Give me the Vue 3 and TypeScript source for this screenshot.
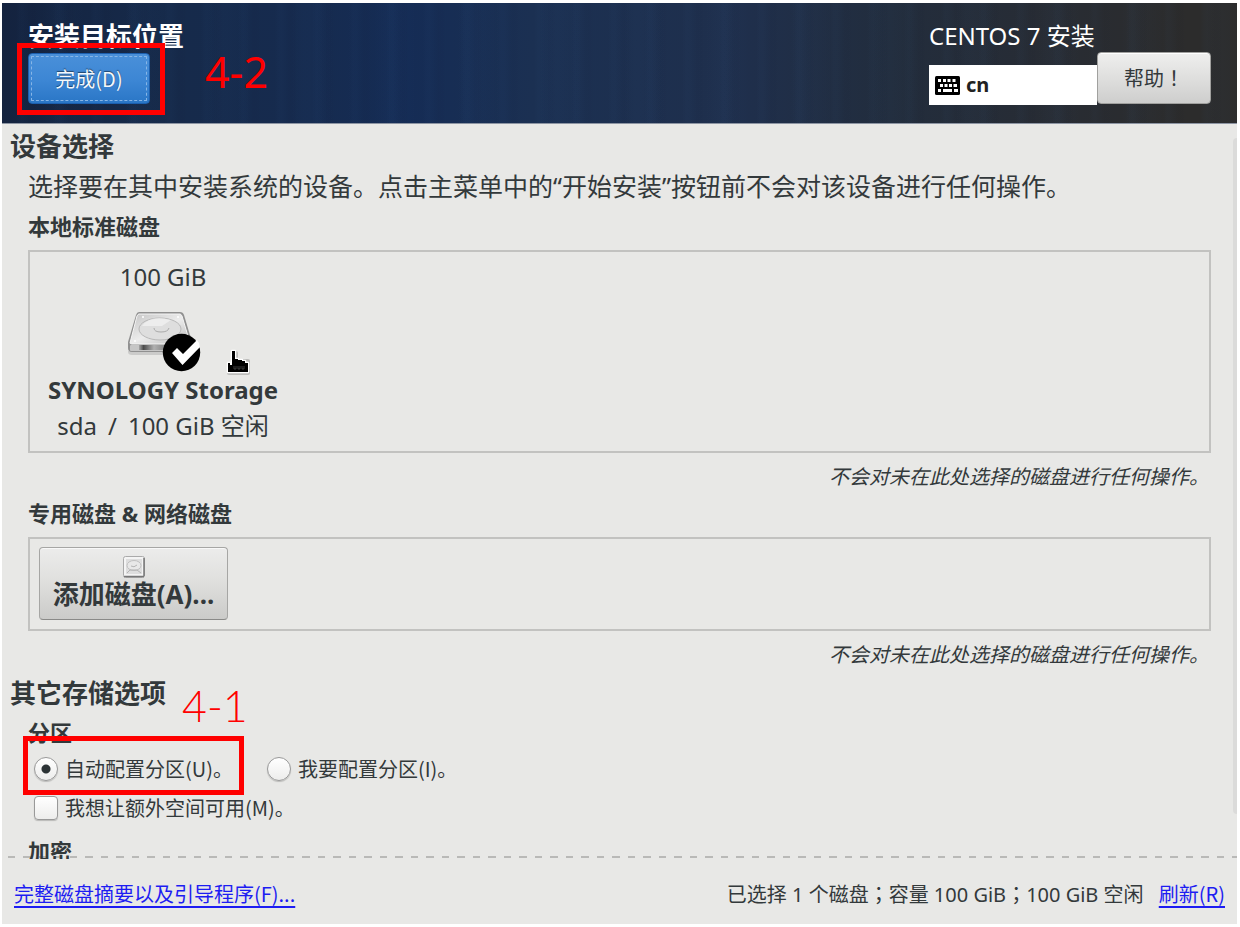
<script setup lang="ts">
import { ref } from 'vue'

const partitioning = ref<'auto' | 'manual'>('auto')
const extraSpace = ref(false)
const untouchedNote = '不会对未在此处选择的磁盘进行任何操作。'
</script>

<template>
  <div class="window">
    <header class="banner">
      <div class="spoke">
        <h1 class="spoke-title">安装目标位置</h1>
        <div class="marked">
          <button type="button" class="done">完成(D)</button>
          <span class="frame frame-done"></span>
          <span class="step step-done">4-2</span>
        </div>
      </div>
      <div class="product">
        <p class="distro">CENTOS 7 安装</p>
        <button type="button" class="layout" aria-label="键盘布局 cn">
          <svg class="keyboard" viewBox="0 0 25 19" width="25" height="19" aria-hidden="true">
            <rect width="25" height="19" rx="1.5" fill="#000" />
            <g fill="#fff">
              <rect x="3" y="3" width="3" height="3" />
              <rect x="8" y="3" width="3" height="3" />
              <rect x="12.500" y="3" width="3" height="3" />
              <rect x="17.500" y="3" width="3" height="3" />
              <rect x="5" y="8" width="3" height="3" />
              <rect x="9.500" y="8" width="3" height="3" />
              <rect x="14" y="8" width="3" height="3" />
              <rect x="18.500" y="8" width="3.500" height="3" />
              <rect x="3" y="13" width="3" height="3" />
              <rect x="8" y="13" width="9" height="3" />
              <rect x="19" y="13" width="4" height="3" />
            </g>
          </svg>
          <span>cn</span>
        </button>
        <button type="button" class="help">帮助<span class="centred">！</span></button>
      </div>
    </header>

    <main class="content">
      <h2>设备选择</h2>
      <p class="intro">选择要在其中安装系统的设备。点击主菜单中的“开始安装”按钮前不会对该设备进行任何操作。</p>

      <h3>本地标准磁盘</h3>
      <section class="disks local">
        <div class="disk">
          <p class="size">100 GiB</p>
          <div class="picture">
            <svg viewBox="-1 0 80 68" width="80" height="68" aria-hidden="true">
              <defs>
                <linearGradient id="lid" x1="0" y1="0" x2="1" y2="1">
                  <stop offset="0" stop-color="#c4c4c4" />
                  <stop offset="0.5" stop-color="#ececec" />
                  <stop offset="1" stop-color="#b8b8b8" />
                </linearGradient>
                <linearGradient id="side" x1="0" y1="0" x2="1" y2="0">
                  <stop offset="0" stop-color="#a8a8a8" />
                  <stop offset="0.15" stop-color="#4a4a4a" />
                  <stop offset="0.5" stop-color="#b0b0b0" />
                  <stop offset="1" stop-color="#777" />
                </linearGradient>
              </defs>
              <path d="M4 45h64v2q-1 2-4 2H8q-4 0-4-3z" fill="#000" opacity="0.12" />
              <path d="M15 6h41q3 0 4 3l8 27v6q0 4-4 4H8q-4 0-4-4v-6l8-27q1-3 3-3z" fill="#909090" />
              <path d="M15 8h41q1 0 2 2l8 27q0 1-2 1H8q-2 0-2-1l7-27q1-2 2-2z" fill="url(#lid)" stroke="#f5f5f5" stroke-width="1" />
              <ellipse cx="36" cy="23" rx="21" ry="11" fill="#dedede" stroke="#b8b8b8" />
              <path d="M18 20q9-12 29-6L38 20z" fill="#f6f6f6" opacity="0.6" />
              <path d="M30 22q0 4 7 4t8-4" fill="none" stroke="#aaa" />
              <rect x="6" y="39" width="60" height="6" rx="1" fill="#c6c6c6" />
              <rect x="15" y="39" width="30" height="5" fill="url(#side)" />
              <circle cx="11" cy="35" r="1" fill="#fff" />
              <circle cx="19" cy="11" r="1" fill="#fff" />
              <circle cx="54" cy="11" r="1" fill="#fff" />
              <circle cx="57.500" cy="46.500" r="18.700" fill="#000" />
              <path d="M48 47l5-5 6 6L73 34q2 2 3 7L58.500 59z" fill="#fff" />
            </svg>
            <svg class="pointer" viewBox="0 0 30 30" width="30" height="30" aria-hidden="true">
              <path d="M10 6h3v8h12v12H6v-8h5z" fill="#000" opacity="0.18" stroke="#000" stroke-width="4" stroke-linejoin="round" />
              <path d="M9 4h3v8h3v1h4v1h3v2h3v9H5v-9h2v2h2z" fill="#000" stroke="#fff" stroke-width="2.500" stroke-linejoin="round" />
              <path d="M9 4h3v8h3v1h4v1h3v2h3v9H5v-9h2v2h2z" fill="#000" />
              <path d="M11 19v3h2v-3M15 19v3h2v-3M19 19v3h2v-3" fill="none" stroke="#555" stroke-width="0.700" />
            </svg>
          </div>
          <p class="name">SYNOLOGY Storage</p>
          <p class="free"><span>sda</span><span>/</span><span>100 GiB 空闲</span></p>
        </div>
      </section>
      <p class="note">{{ untouchedNote }}</p>

      <h3>专用磁盘 &amp; 网络磁盘</h3>
      <section class="disks network">
        <button type="button" class="add">
          <svg viewBox="0 0 22 22" width="22" height="22" aria-hidden="true">
            <rect x="0.500" y="0.500" width="21" height="21" rx="2" fill="#f4f4f4" stroke="#aaa" />
            <path d="M1 20.500h20M21 2v18" stroke="#777" stroke-width="1.500" />
            <rect x="3" y="3" width="16" height="15" fill="#dedede" />
            <ellipse cx="11" cy="9.500" rx="7" ry="5" fill="#e8e8e8" stroke="#c0c0c0" />
            <path d="M8 10q3 2 6-1M4 17l3-3h7l4 3" fill="none" stroke="#b4b4b4" />
          </svg>
          <span>添加磁盘(A)...</span>
        </button>
      </section>
      <p class="note">{{ untouchedNote }}</p>

      <h2 class="later">其它存储选项</h2>
      <h3 class="part">分区</h3>
      <div class="choices marked">
        <label><input v-model="partitioning" type="radio" name="partitioning" value="auto" />自动配置分区(U)。</label>
        <label><input v-model="partitioning" type="radio" name="partitioning" value="manual" />我要配置分区(I)。</label>
        <span class="frame frame-auto"></span>
        <span class="step step-auto">4-1</span>
      </div>
      <div class="choices extra">
        <label><input v-model="extraSpace" type="checkbox" />我想让额外空间可用(M)。</label>
      </div>
      <h3 class="crypt">加密</h3>
      <span class="scrollbar"></span>
    </main>

    <footer class="summary">
      <a href="#summary">完整磁盘摘要以及引导程序(F)...</a>
      <p class="totals">已选择 1 个磁盘<span class="centred">；</span>容量 100 GiB<span class="centred">；</span>100 GiB 空闲 <a class="refresh" href="#refresh">刷新(R)</a></p>
    </footer>
  </div>
</template>

<style>
body {
  margin: 0;
  background: #fff;
}
</style>

<style scoped>
.window {
  box-sizing: border-box;
  height: 100vh;
  padding: 3px 3px 3px 2px;
  display: flex;
  flex-direction: column;
  font: 20px/28px "Noto Sans CJK SC", "Noto Sans", sans-serif;
  color: #33393b;
  background: #e8e8e6 content-box;
}
h1, h2, h3, p {
  margin: 0;
}
button {
  font: inherit;
  color: inherit;
  padding: 0;
}
.centred {
  font-family: "Noto Sans CJK TC", sans-serif;
}
.banner {
  flex: none;
  display: flex;
  justify-content: space-between;
  box-sizing: border-box;
  height: 121px;
  padding: 16px 26px 0;
  border-bottom: 1px solid #8d95a3;
  color: #fff;
  background:
    repeating-linear-gradient(90deg, rgba(60, 110, 170, 0) 0 14px, rgba(60, 110, 170, 0.03) 18px 21px, rgba(0, 0, 20, 0.02) 29px 33px, rgba(60, 110, 170, 0) 37px),
    repeating-linear-gradient(90deg, rgba(60, 110, 170, 0) 0 40px, rgba(60, 110, 170, 0.03) 52px 58px, rgba(60, 110, 170, 0) 83px),
    linear-gradient(90deg, #14233f 0%, #162a4a 13%, #162b4f 25%, #152c55 33%, #1b3052 43%, #1f2f4c 60%, #222d3d 72%, #282c33 86%, #2c2c2c 96%);
}
.spoke-title {
  font-size: 26px;
  line-height: 32px;
}
.marked {
  position: relative;
}
.done {
  display: block;
  margin-top: 2px;
  width: 122px;
  height: 51px;
  border: 1px solid #1c5fae;
  border-radius: 4px;
  background: linear-gradient(#4a90d9, #3c86d4 55%, #2a76c6);
  color: #f4f8fc;
  text-shadow: 0 -1px 1px rgba(0, 0, 0, 0.5);
  outline: 1px dashed #86b5e6;
  outline-offset: -4px;
}
.frame {
  position: absolute;
  box-sizing: border-box;
  border: 5px solid #f00;
  pointer-events: none;
}
.frame-done {
  left: -11px;
  top: -10px;
  width: 148px;
  height: 72px;
}
.step {
  position: absolute;
  color: #f00;
  font-size: 43px;
  line-height: 42px;
  white-space: nowrap;
}
.step-done {
  left: 177px;
  top: -2px;
  font-family: "Noto Sans", sans-serif;
}
.product {
  display: grid;
  grid-template-columns: 168px 114px;
  grid-template-rows: 33px 53px;
}
.distro {
  grid-column: 1 / 3;
  font-size: 24px;
  line-height: 33px;
  font-family: "Noto Sans", "Noto Sans CJK SC", sans-serif;
}
.layout {
  align-self: end;
  height: 40px;
  display: flex;
  align-items: center;
  gap: 6px;
  padding: 0 6px;
  border: 0;
  background: #fff;
  color: #222;
  font: bold 20px/28px "Noto Sans", sans-serif;
}
.help {
  height: 52px;
  border: 1px solid #a0a09e;
  border-radius: 4px;
  background: linear-gradient(#efefee, #e2e2e1 40%, #cececd);
  box-shadow: inset 0 1px #fff;
  color: #33393b;
}
.content {
  flex: 1;
  min-height: 0;
  position: relative;
  overflow: hidden;
  padding: 3px 26px 0;
  margin-bottom: -3px;
}
h2 {
  margin-left: -18px;
  font-size: 26px;
  line-height: 36px;
}
h3 {
  font: bold 22px/28px "Noto Sans", "Noto Sans CJK SC", sans-serif;
}
.intro {
  margin: 2px 0 5px;
  font: 25px/42px "Noto Sans", "Noto Sans CJK SC", sans-serif;
}
.disks {
  box-sizing: border-box;
  margin-top: 10px;
  border: 2px solid #c2c2c0;
}
.local {
  min-height: 203px;
  padding: 7px 18px 6px;
}
.disk {
  width: max-content;
  text-align: center;
  font: 24px/36px "Noto Sans", "Noto Sans CJK SC", sans-serif;
}
.picture {
  display: flex;
  justify-content: center;
  position: relative;
  margin: 11px 0 4px;
  height: 62px;
}
.pointer {
  position: absolute;
  right: 25px;
  top: 41px;
}
.name {
  font-weight: bold;
}
.free {
  display: flex;
  justify-content: center;
  gap: 11px;
}
.note {
  margin: 9px 2px 0 0;
  text-align: right;
  font-style: italic;
}
.note + h3 {
  margin-top: 9px;
}
.network {
  min-height: 94px;
  padding: 8px 9px;
}
.add {
  display: flex;
  flex-direction: column;
  align-items: center;
  width: 189px;
  height: 73px;
  padding-top: 8px;
  box-sizing: border-box;
  border: 1px solid #a6a6a4;
  border-bottom-color: #8a8a88;
  border-radius: 4px;
  background: linear-gradient(#ececeb, #e0e0de 45%, #cbcbc9);
  box-shadow: inset 0 1px #f8f8f8;
  font: bold 26px/32px "Noto Sans", "Noto Sans CJK SC", sans-serif;
}
.add svg {
  flex: none;
}
.later {
  margin-top: 6px;
}
.part {
  margin-top: 8px;
}
.choices {
  display: flex;
  gap: 34px;
  margin: 9px 0 0 6px;
}
.choices.extra {
  margin-top: 11px;
}
.choices label {
  display: flex;
  align-items: center;
  gap: 7px;
}
.choices input {
  appearance: none;
  box-sizing: border-box;
  width: 24px;
  height: 24px;
  margin: 0;
  border: 1px solid #999;
  border-radius: 4px;
  background: linear-gradient(#fff, #ededec);
  box-shadow: 0 1px 1px rgba(0, 0, 0, 0.2);
}
.choices input[type="radio"] {
  border-radius: 50%;
}
.choices input[type="radio"]:checked {
  background: radial-gradient(circle, #2c3335 0 4px, rgba(255, 255, 255, 0) 5px), linear-gradient(#fff, #ededec);
}
.choices input[type="checkbox"]:checked {
  background: #33393b;
}
.frame-auto {
  left: -11px;
  top: -19px;
  width: 221px;
  height: 59px;
}
.step-auto {
  left: 148px;
  top: -70px;
  font-family: Lato, sans-serif;
  font-weight: 300;
}
.crypt {
  margin-top: 15px;
}
.scrollbar {
  position: absolute;
  right: 0;
  top: 14px;
  bottom: 45px;
  width: 4px;
  border-radius: 4px 0 0 4px;
  background: #dbdbda;
}
.summary {
  flex: none;
  display: flex;
  justify-content: space-between;
  align-items: center;
  box-sizing: border-box;
  height: 68px;
  padding: 8px 12px 0;
  background: repeating-linear-gradient(90deg, #b9b9b7 0 7px, #e8e8e6 7px 15px, #b9b9b7 15px 23px, #e8e8e6 23px 31px) 6px 0 / 100% 2px no-repeat;
}
.summary a {
  color: #1d1df2;
  font-family: "Noto Sans CJK SC", sans-serif;
  text-underline-offset: 4px;
}
.totals {
  font-family: "Noto Sans", "Noto Sans CJK SC", sans-serif;
}
.refresh {
  margin-left: 10px;
}
</style>
